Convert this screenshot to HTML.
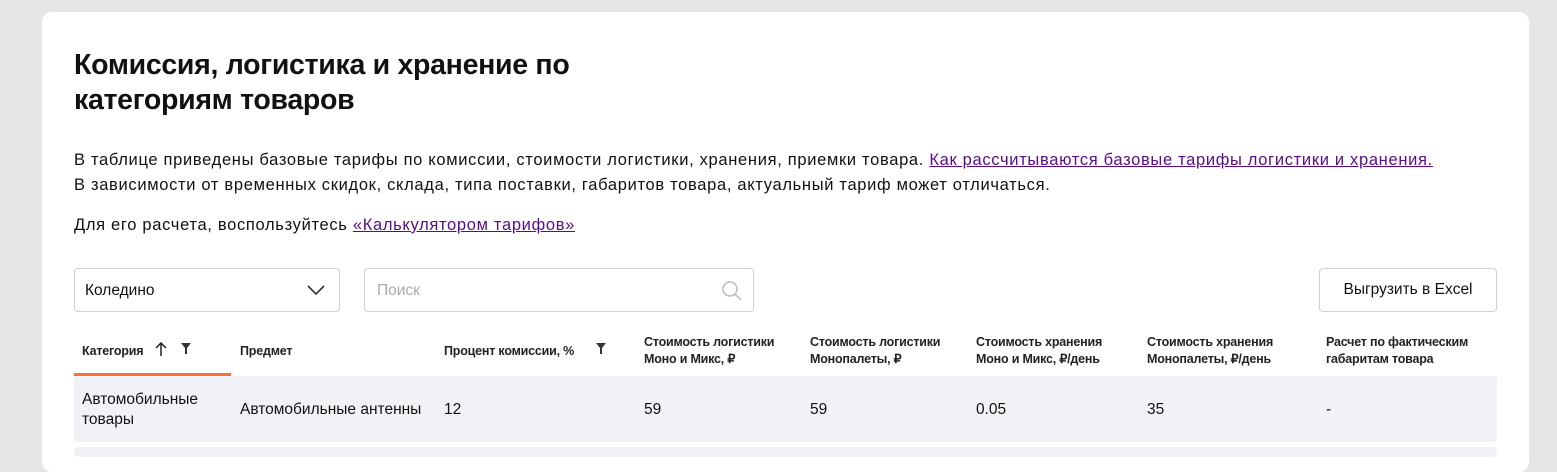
<!DOCTYPE html>
<html><head><meta charset="utf-8"><style>
*{box-sizing:border-box;margin:0;padding:0}
body{width:1557px;height:451px;overflow:hidden;background:#e6e6e6;font-family:"Liberation Sans",sans-serif;color:#111}
.card{position:absolute;left:42px;top:12px;width:1487px;height:460px;background:#fff;border-radius:10px}
.a{position:absolute;white-space:nowrap}
h1{position:absolute;left:74px;top:48px;font-size:28.5px;line-height:35px;font-weight:bold;letter-spacing:-0.3px}
.p{font-size:16.5px;letter-spacing:0.68px}
a{color:#5a0a8c;text-decoration:underline}
.box{position:absolute;border:1px solid #d0d0d0;border-radius:4px;background:#fff;height:44px;top:268px}
.th{font-size:12.5px;line-height:17px;font-weight:bold;letter-spacing:-0.2px;color:#222}
.td{font-size:15.5px}
</style></head><body>
<div class="card"></div>
<h1>Комиссия, логистика и хранение по<br>категориям товаров</h1>
<div class="a p" style="left:74px;top:151px">В таблице приведены базовые тарифы по комиссии, стоимости логистики, хранения, приемки товара. <a>Как рассчитываются базовые тарифы логистики и хранения.</a></div>
<div class="a p" style="left:74px;top:176px">В зависимости от временных скидок, склада, типа поставки, габаритов товара, актуальный тариф может отличаться.</div>
<div class="a p" style="left:74px;top:216px">Для его расчета, воспользуйтесь <a>«Калькулятором тарифов»</a></div>
<div class="box" style="left:74px;width:266px"><span class="a" style="left:10px;top:13px;font-size:15.5px">Коледино</span>
<svg class="a" style="left:232px;top:15px" width="18" height="12"><path d="M1 2l8 8 8-8" fill="none" stroke="#333" stroke-width="1.6"/></svg></div>
<div class="box" style="left:364px;width:390px"><span class="a" style="left:12px;top:13px;font-size:15.5px;color:#aaa">Поиск</span>
<svg class="a" style="left:356px;top:11px" width="22" height="22"><circle cx="9" cy="9" r="7" fill="none" stroke="#bbb" stroke-width="1.5"/><path d="M14 14l6 6" stroke="#bbb" stroke-width="1.5"/></svg></div>
<div class="box" style="left:1319px;width:178px;text-align:center;line-height:42px;font-size:15.5px">Выгрузить в Excel</div>
<div class="a th" style="left:82px;top:343px">Категория</div>
<svg class="a" style="left:155px;top:342px" width="12" height="14"><path d="M6 14V1M1 6l5-5 5 5" fill="none" stroke="#222" stroke-width="1.5"/></svg>
<svg class="a" style="left:181px;top:343px" width="10" height="11"><path d="M0 0h10L6 5v6H4V5z" fill="#333"/></svg>
<div class="a" style="left:74px;top:373px;width:157px;height:3px;background:#f9703c"></div>
<div class="a th" style="left:240px;top:343px">Предмет</div>
<div class="a th" style="left:444px;top:343px">Процент комиссии, %</div>
<svg class="a" style="left:596px;top:343px" width="10" height="11"><path d="M0 0h10L6 5v6H4V5z" fill="#333"/></svg>
<div class="a th" style="left:644px;top:334px">Стоимость логистики<br>Моно и Микс, ₽</div>
<div class="a th" style="left:810px;top:334px">Стоимость логистики<br>Монопалеты, ₽</div>
<div class="a th" style="left:976px;top:334px">Стоимость хранения<br>Моно и Микс, ₽/день</div>
<div class="a th" style="left:1147px;top:334px">Стоимость хранения<br>Монопалеты, ₽/день</div>
<div class="a th" style="left:1326px;top:334px">Расчет по фактическим<br>габаритам товара</div>
<div class="a" style="left:74px;top:376px;width:1423px;height:66px;background:#f2f2f6;border-radius:0 0 4px 4px"></div>
<div class="a" style="left:74px;top:447px;width:1423px;height:10px;background:#f2f2f6;border-radius:4px"></div>
<div class="a td" style="left:82px;top:390px;line-height:20px">Автомобильные<br>товары</div>
<div class="a td" style="left:240px;top:401px">Автомобильные антенны</div>
<div class="a td" style="left:444px;top:401px">12</div>
<div class="a td" style="left:644px;top:401px">59</div>
<div class="a td" style="left:810px;top:401px">59</div>
<div class="a td" style="left:976px;top:401px">0.05</div>
<div class="a td" style="left:1147px;top:401px">35</div>
<div class="a td" style="left:1326px;top:401px">-</div>
</body></html>
